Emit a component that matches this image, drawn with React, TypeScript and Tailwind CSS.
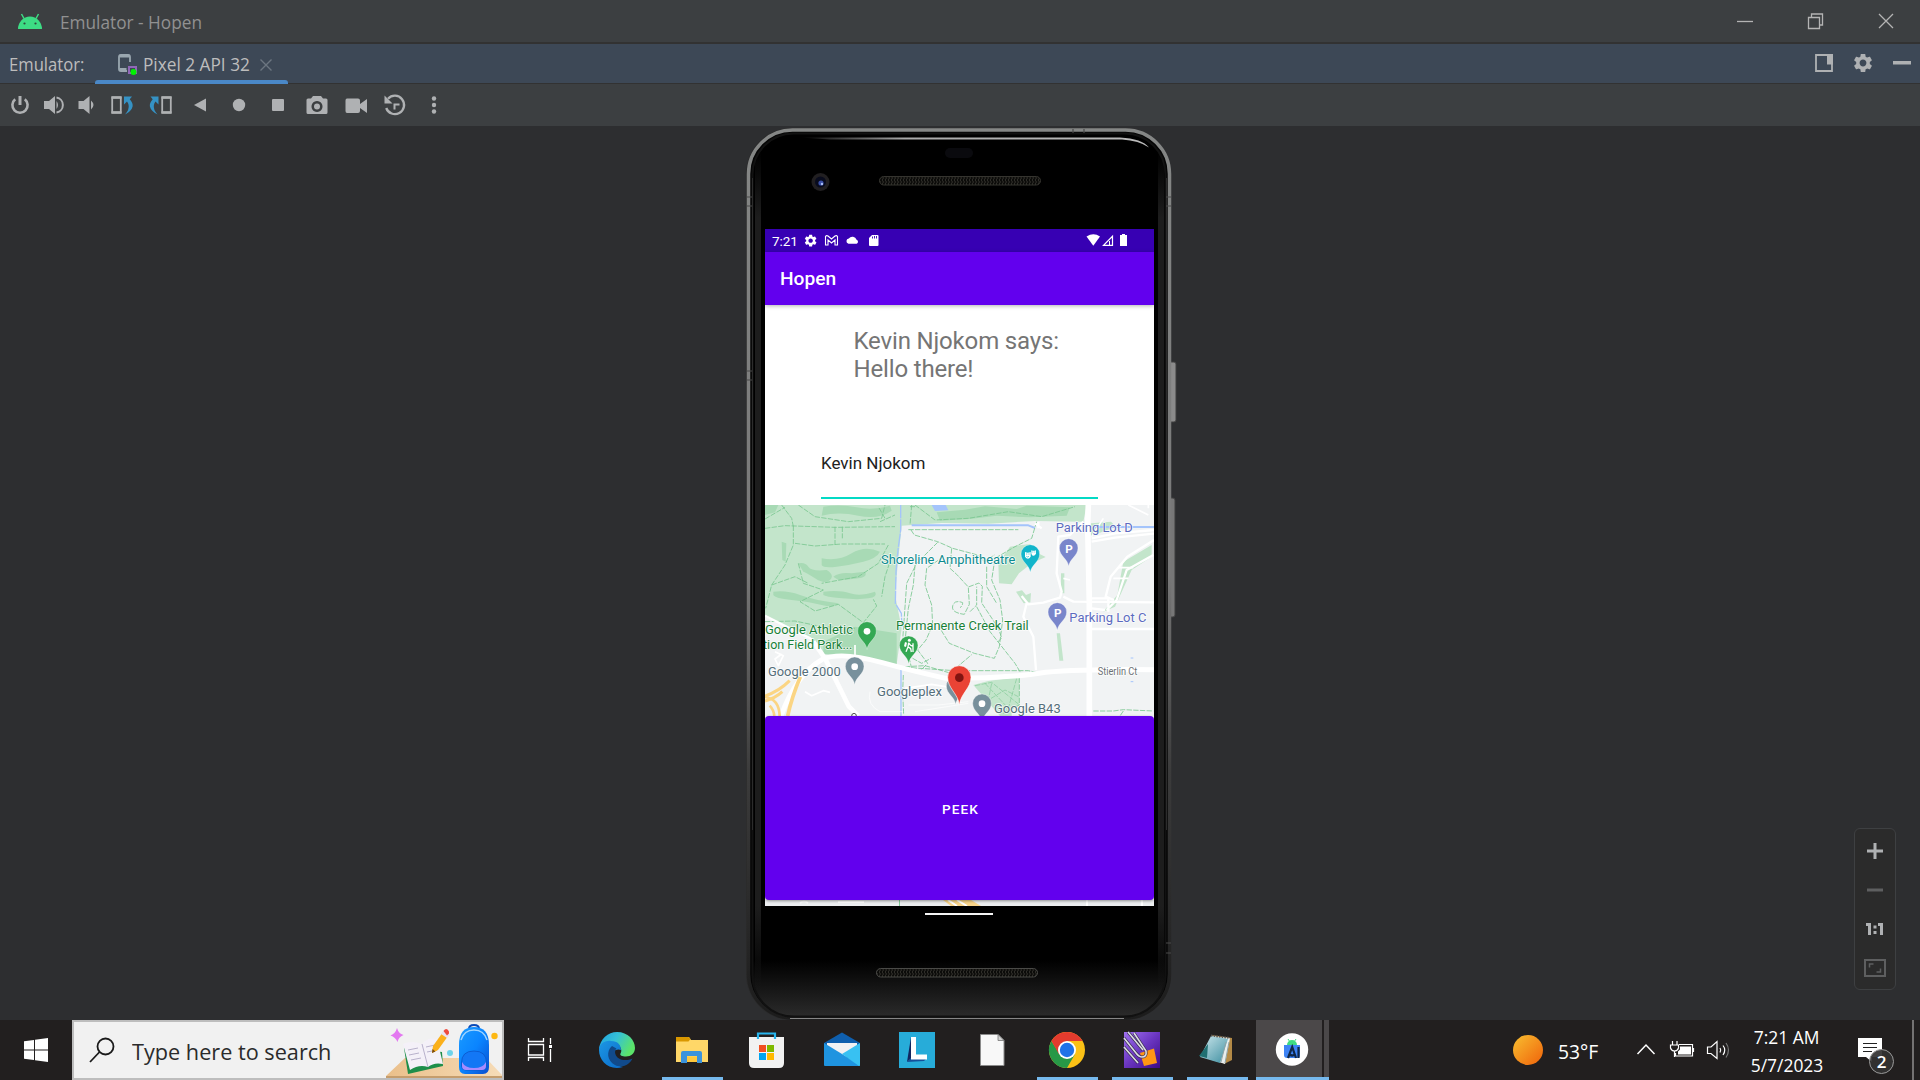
import type { ReactNode } from "react";

type ArtProps = { x: number; y: number; w: number; h: number; children: ReactNode };

/* Inline drawing whose viewBox uses window coordinates. */
function Art({ x, y, w, h, children }: ArtProps) {
  return (
    <svg className="block shrink-0" width={w} height={h} viewBox={`${x} ${y} ${w} ${h}`} fill="none">
      {children}
    </svg>
  );
}

const GEAR =
  "M19.14 12.94c.04-.3.06-.61.06-.94 0-.32-.02-.64-.07-.94l2.03-1.58c.18-.14.23-.41.12-.61l-1.92-3.32c-.12-.22-.37-.29-.59-.22l-2.39.96c-.5-.38-1.03-.7-1.62-.94l-.36-2.54c-.04-.24-.24-.41-.48-.41h-3.84c-.24 0-.43.17-.47.41l-.36 2.54c-.59.24-1.13.57-1.62.94l-2.39-.96c-.22-.08-.47 0-.59.22L2.74 8.87c-.12.21-.08.47.12.61l2.03 1.58c-.05.3-.09.63-.09.94s.02.64.07.94l-2.03 1.58c-.18.14-.23.41-.12.61l1.92 3.32c.12.22.37.29.59.22l2.39-.96c.5.38 1.03.7 1.62.94l.36 2.54c.05.24.24.41.48.41h3.84c.24 0 .44-.17.47-.41l.36-2.54c.59-.24 1.13-.56 1.62-.94l2.39.96c.22.08.47 0 .59-.22l1.92-3.32c.12-.22.07-.47-.12-.61l-2.01-1.58zM12 15.6c-1.98 0-3.6-1.62-3.6-3.6s1.62-3.6 3.6-3.6 3.6 1.62 3.6 3.6-1.62 3.6-3.6 3.6z";

function TitleBar() {
  return (
    <header className="flex h-11 items-center border-b-2 border-[#323232] bg-[#3c3f41]">
      <Art x={0} y={0} w={60} h={42}>
        <path d="M18 29a12 12.500 0 0 1 24 0z" fill="#3ddc84" />
        <path d="M21.500 14l2.500 4.500M38.500 14L36 18.500" stroke="#3ddc84" strokeWidth="1.500" />
        <circle cx="24.500" cy="23.500" r="1.100" fill="#2d4a3a" />
        <circle cx="35.500" cy="23.500" r="1.100" fill="#2d4a3a" />
      </Art>
      <span className="origin-left scale-x-[0.985] pt-0.5 text-[17.500px] whitespace-nowrap text-[#919191]">Emulator - Hopen</span>
      <div className="ml-auto flex">
        <Art x={1710} y={0} w={70} h={42}>
          <path d="M1737 21.500h16" stroke="#b4b4b4" strokeWidth="1.300" />
        </Art>
        <Art x={1780} y={0} w={70} h={42}>
          <path d="M1808.500 17.500h11v11h-11zM1811.500 17v-3h11v11h-3" stroke="#b4b4b4" strokeWidth="1.300" />
        </Art>
        <Art x={1850} y={0} w={70} h={42}>
          <path d="M1879 14l14 14M1893 14l-14 14" stroke="#b4b4b4" strokeWidth="1.300" />
        </Art>
      </div>
    </header>
  );
}

function TabBar() {
  return (
    <div className="flex h-10 items-stretch border-b border-[#323232] bg-[#3d4856]">
      <div className="flex w-[95px] items-center pt-0.5 pl-[9px] text-[17.500px] text-[#bdbdbd]">
        <span className="origin-left scale-x-[0.95]">Emulator:</span>
      </div>
      <div className="relative flex w-[193px] items-center">
        <Art x={95} y={44} w={48} h={39}>
          <path d="M130 62V57q0-2-2-2h-7q-2 0-2 2v12q0 2 2 2h6" stroke="#9aa7b0" strokeWidth="1.800" />
          <path d="M119.500 56h10M119.500 69.500h7" stroke="#9aa7b0" strokeWidth="3" />
          <path d="M129 67h7v6h-7z" stroke="#9068b8" strokeWidth="2" />
          <circle cx="133.500" cy="72" r="3" fill="#00f200" />
        </Art>
        <span className="w-[106px] origin-left scale-x-[0.985] pt-0.5 text-[17.500px] whitespace-nowrap text-[#bdbdbd]">Pixel 2 API 32</span>
        <Art x={249} y={44} w={36} h={39}>
          <path d="M260.500 59.500l11 11M271.500 59.500l-11 11" stroke="#6c7680" strokeWidth="1.400" />
        </Art>
        <div className="absolute inset-x-0 -bottom-px h-1 rounded-t-[3px] bg-[#4a88c7]" />
      </div>
      <div className="ml-auto flex">
        <Art x={1805} y={44} w={38} h={39}>
          <path d="M1816 55h16v16h-16z" stroke="#afb1b3" strokeWidth="1.800" />
          <path d="M1827 54h6v10.500h-6z" fill="#afb1b3" />
        </Art>
        <Art x={1843} y={44} w={39} h={39}>
          <path transform="translate(1851.600 51.600) scale(.95)" d={GEAR} fill="#afb1b3" />
        </Art>
        <Art x={1882} y={44} w={38} h={39}>
          <path d="M1893 61h18v3.500h-18z" fill="#afb1b3" />
        </Art>
      </div>
    </div>
  );
}

function Toolbar() {
  const c = "#afb1b3";
  return (
    <div className="flex h-[42px] bg-[#3c3f41]">
      <Art x={0} y={84} w={37} h={42}>
        <path d="M15.200 99.300a7.600 7.600 0 1 0 9.600 0" stroke={c} strokeWidth="2.600" />
        <path d="M18.500 96h3v9h-3z" fill={c} />
      </Art>
      <Art x={37} y={84} w={31} h={42}>
        <path d="M44 101h5l6-5v18l-6-5h-5zM56.500 101q3 4 0 8z" fill={c} />
        <path d="M56.500 97.500a7.600 7.600 0 0 1 0 15" stroke={c} strokeWidth="2" />
      </Art>
      <Art x={68} y={84} w={35} h={42}>
        <path d="M78.500 101h5l6-5v18l-6-5h-5zM91 100.500q5 4.500 0 9z" fill={c} />
      </Art>
      <Art x={103} y={84} w={39} h={42}>
        <path d="M112.200 97.500h8.600v15h-8.600z" stroke={c} strokeWidth="1.800" />
        <path d="M111.500 97.500h10M111.500 112.500h10" stroke={c} strokeWidth="2.500" />
        <path d="M124 96.500h8l-2.200 2.700q3.400 4 2.800 7.300q-1 4.500-7.600 8q4.500-5 3.600-9.500q-.3-2-1.600-3.600l-3 3z" fill="#3592c4" />
      </Art>
      <Art x={142} y={84} w={39} h={42}>
        <path d="M162.200 97.500h8.600v15h-8.600z" stroke={c} strokeWidth="1.800" />
        <path d="M161.500 97.500h10M161.500 112.500h10" stroke={c} strokeWidth="2.500" />
        <path d="M158.500 96.500h-8l2.200 2.700q-3.400 4-2.800 7.300q1 4.500 7.600 8q-4.500-5-3.600-9.500q.3-2 1.600-3.600l3 3z" fill="#3592c4" />
      </Art>
      <Art x={181} y={84} w={39} h={42}>
        <path d="M206 98.500v13l-12-6.500z" fill={c} />
      </Art>
      <Art x={220} y={84} w={39} h={42}>
        <circle cx="239" cy="105" r="6.200" fill={c} />
      </Art>
      <Art x={259} y={84} w={39} h={42}>
        <rect x="272" y="99" width="12" height="12" rx="1" fill={c} />
      </Art>
      <Art x={298} y={84} w={39} h={42}>
        <path fillRule="evenodd" d="M313 96h8l2 2.500h3q1.500 0 1.500 1.500v12.500q0 1.500-1.500 1.500h-18q-1.500 0-1.500-1.500V100q0-1.500 1.500-1.500h3zM317 101a5.500 5.500 0 1 0 .01 0z" fill={c} />
        <circle cx="317" cy="106.500" r="3" fill={c} />
      </Art>
      <Art x={337} y={84} w={39} h={42}>
        <path d="M347 98.500h11q2 0 2 2v3.500l7-5v14l-7-5v3q0 2-2 2h-11q-1.500 0-1.500-2v-10.500q0-2 1.500-2z" fill={c} />
      </Art>
      <Art x={376} y={84} w={39} h={42}>
        <path d="M388 98.800a9.200 9.200 0 1 1-1.800 9.200" stroke={c} strokeWidth="2.300" />
        <path d="M384.500 95.500v8h8zM393.500 103.500h6v2h-4v4h-2z" fill={c} />
      </Art>
      <Art x={415} y={84} w={39} h={42}>
        <circle cx="434" cy="98.500" r="2.200" fill={c} />
        <circle cx="434" cy="105" r="2.200" fill={c} />
        <circle cx="434" cy="111.500" r="2.200" fill={c} />
      </Art>
    </div>
  );
}

function Pin({ x, y, fill, children }: { x: number; y: number; fill: string; children?: ReactNode }) {
  return (
    <g transform={`translate(${x} ${y})`}>
      <path d="M0 83C-3 60-28 52-28 28a28 28 0 1 1 56 0C28 52 3 60 0 83z" fill={fill} stroke="#fff" strokeOpacity=".55" strokeWidth="2" />
      {children ?? <circle cx="0" cy="29" r="10" fill="#fff" />}
    </g>
  );
}

function Label({ x, y, len, fill, size = 41, children }: { x: number; y: number; len: number; fill: string; size?: number; children: string }) {
  return (
    <text x={x} y={y} textLength={len} lengthAdjust="spacingAndGlyphs" fontSize={size} fill={fill} stroke="#fff" strokeWidth="5" strokeOpacity=".8" paintOrder="stroke" fontWeight="400">
      {children}
    </text>
  );
}

function CampusMap() {
  return (
    <svg className="block h-[211px] w-[389px] font-[Roboto,sans-serif]" viewBox="30 30 1167 633" fill="none" strokeLinejoin="round">
      <rect x="30" y="30" width="1167" height="633" fill="#f1f3f4" />
      {/* parkland */}
      <path d="M30 30H995L985 80 840 78 700 86 560 84 440 92 428 210 420 300 440 400 425 508 300 480 200 475 165 425 30 365z" fill="#c3e5cb" />
      <path d="M205 440L300 395 425 415V508L300 482 205 478z" fill="#a8dab5" />
      <path d="M730 205L765 155 825 147 830 165 872 186 830 205 792 235 770 268 732 265zM783 290l18-4 12 14 15-6-2 28-20 3zM1087 300l18-100 85-50v35l-60 40-50 110-35 15zM918 235h10v60h-10zM905 415h10l10 82h-12z" fill="#c3e5cb" />
      <path d="M655 570L700 558 760 550 793 545V632L770 640 770 663 735 663z" fill="#c3e5cb" />
      <path d="M1008 85l60-5 15 15-75 28z" fill="#c3e5cb" />
      <g fill="#a8dab5">
        <path d="M205 35q50-8 100 2t100-5l5 15q-40 28-100 15t-110 0zM80 140l14 5-2 55-10-5z" />
        <path d="M200 190q50 10 90-15t85-5q-10 20-50 30t-80 15-45-5zM205 290q50-5 80 5t75-5q10 15-20 20t-80 0-55-10zM55 290q40-5 80 10t115 25q-10 15-50 5t-90-15-55-15z" />
        <path d="M130 205q20-5 30 10t55 10q25 15 10 30t-45-5-35-20zM545 52l85-8 60-10 95 8 30-10 130 5-10 25-110 5-100-5-80 10-90 5z" />
        <path d="M30 30l40 0-10 22-30 8zM235 245q20-15 55-10l40-5q10 15-20 20t-60 5z" />
      </g>
      <path d="M530 30h42l8 16-40 2z" fill="#a4c4fb" />
      {/* creeks */}
      <g stroke="#a4c4fb">
        <path d="M437 30V105l-8 60-6 65-2 95 18 30 2 40" strokeWidth="4" strokeDasharray="40 3" />
        <path d="M470 91H820l20 8M1015 96H1197" strokeWidth="6" />
        <path d="M438 520V663" strokeWidth="4" />
        <path d="M1127 489h8M1127 560h8" strokeWidth="3" />
      </g>
      {/* walking trails */}
      <g stroke="#7cc792" strokeWidth="2.600" strokeDasharray="16 4">
        <path d="M30 100L90 92 240 97 420 95M115 92V150l-25 60-40 60-18 70M30 72l60-35M80 30l30 40 5 25M130 30l50 35 100 15 100-10 10-40M390 70l-20-35M120 145l60 8 80-6 130 0M130 205l15 60 60 20-70 35 45 28 70-20 75 55 40-50-10-20M50 270l70-25 40 20M240 95V150M262 95v35M375 80l45-20M400 150l-30 55-60 40-110 20M410 185l-20 60-10 60M30 380L120 378 200 395 300 400" />
        <path d="M460 104H790M470 30l-5 60M465 35h15M480 30l60 45 100-5 120-20 100 15 100-30M845 80l-15 50-50 25-60 35-10 65 25 60 8 60-10 80-15 35-60-15-75-30-25-40V380" />
        <path d="M468 105l10 15 70 20 45 20 75 20 20 20 30-20M548 142L485 205 455 265 442 450M565 185l-50 35-5 50 20 60 3 60-20 45-25 30 30 40-25 25-50-10M480 210l-5 60-15 70-10 100 20 80" />
        <path d="M590 160l-5 60 20 18 35 38 32-12 10 10-2 50 50 75 10 30-12 12M640 278l3 50-15 30q-40-5-35-25t30-10q0 10-8 15M645 350l20-20V275M665 335l40 75 75 95 15 25M695 215v60l30 50M450 515l60-3 75 22 65-55M450 517l150 10 220 0 25 5M455 480l45 25 28-15M1015 648h60l30-4 90 4M1105 648l-10 15M445 540l-2 50 3 70M793 548V630l-50 25" />
        <path d="M660 572l50-10 80 65M690 565l70 75 25-90M710 565l-10 50 50-30 40 20" strokeWidth="1.800" />
      </g>
      {/* streets */}
      <g stroke="#fff">
        <path d="M1000 30l-2 60 5 230v343" strokeWidth="17" />
        <path d="M78 663q45-125 124-170 55-25 180 10 90 25 190 47 200 0 300-18 110-10 325-8" strokeWidth="15" />
        <path d="M175 440l35 50 30 60 42 85 28 28" strokeWidth="14" />
        <path d="M30 362l55 28 90 45" strokeWidth="7" />
        <path d="M985 80l-40 40-35 5-5 110 15 55-5 18-50 15-45 5-20-25M815 325l-10 40 30 60 8 100M925 305l30 15 245 2M1010 130l70-15 117-10M1010 140l70-12 117-12M1197 135l-80 50-50 60-15 60 25 10M1055 345l30-30 30-90 80-45M1010 310h50v40M1010 402H1197M1010 340l40 5M840 85l20 15M850 100v-20" strokeWidth="7" />
        <path d="M1010 125l35-55M1090 218h45M1075 250h45M1120 30l60 30M1180 30v10M60 470l25 12-15 30-10-20 20-15M300 480v-30M150 590l20 12 35-15 20 5M450 580l80-12 60 10M925 250l20 5" strokeWidth="5" />
        <path d="M345 590q-10 40 30 60h70M460 630h90l90-10M480 650l160-25" strokeWidth="2" />
      </g>
      {/* highway ramps */}
      <g stroke="#fbd583">
        <path d="M30 603q42-14 74-46M30 618q30-8 52-28" strokeWidth="9" />
        <path d="M30 606q42 5 44 57M44 632q12 12 14 31" strokeWidth="8" />
        <path d="M98 663q12-56 38-118" strokeWidth="11" />
      </g>
      <path d="M290 663q0-8 7-8t7 8" stroke="#555" strokeWidth="3" />
      {/* place labels and markers */}
      <Label x={378} y={207} len={403} fill="#0b8a8f">Shoreline Amphitheatre</Label>
      <Label x={902} y={112} len={231} fill="#5c6bc0">Parking Lot D</Label>
      <Label x={943} y={381} len={231} fill="#5c6bc0">Parking Lot C</Label>
      <Label x={423} y={404} len={398} fill="#188038">Permanente Creek Trail</Label>
      <Label x={30} y={416} len={264} fill="#188038">Google Athletic</Label>
      <Label x={24} y={462} len={268} fill="#188038">tion Field Park...</Label>
      <Label x={39} y={544} len={218} fill="#546e7a">Google 2000</Label>
      <Label x={366} y={604} len={195} fill="#546e7a">Googleplex</Label>
      <Label x={717} y={654} len={200} fill="#546e7a">Google B43</Label>
      <Label x={1028} y={540} len={119} size={30} fill="#6b7074">Stierlin Ct</Label>
      <Pin x={826} y={149} fill="#12b5cb">
        <path d="M-16 22q8 4 17 0v14q-8 12-17 0zM3 17q7 3 14 0v10q-4 8-10 6l-4-5z" fill="#fff" />
        <path d="M-13 28h4M-6 28h4M-12 35q4 4 8 0M6 22h3M12 22h3" stroke="#12b5cb" strokeWidth="2" />
      </Pin>
      {[[941, 131], [907, 323]].map(([x, y]) => (
        <Pin key={x} x={x} y={y} fill="#7986cb">
          <text x="1" y="42" textAnchor="middle" fontSize="35" fontWeight="700" fill="#fff">P</text>
        </Pin>
      ))}
      <Pin x={336} y={380} fill="#34a853" />
      <Pin x={461} y={423} fill="#34a853">
        <circle cx="2" cy="13" r="4.500" fill="#fff" />
        <path d="M0 20l-2 13-6 14M-1 33l7 5 2 10M0 21l6 7 6 2M13 22v26" stroke="#fff" strokeWidth="4" />
        <path d="M-11 18l6 2-3 13-6-2z" fill="#fff" />
      </Pin>
      <Pin x={299} y={486} fill="#78909c" />
      <Pin x={602} y={545} fill="#78909c" />
      <Pin x={681} y={597} fill="#78909c" />
      <path d="M613 630C609 595 578 580 578 547a35 35 0 1 1 70 0C648 580 617 595 613 630z" fill="#ea4335" stroke="#fff" strokeOpacity=".6" strokeWidth="3" />
      <circle cx="613" cy="548" r="13" fill="#811411" />
    </svg>
  );
}

function PhoneShell() {
  return (
    <svg className="absolute top-0 left-0" width="440" height="894" viewBox="740 126 440 894" fill="none">
      <defs>
        <linearGradient id="rim" x1="0" y1="128" x2="0" y2="1020" gradientUnits="userSpaceOnUse">
          <stop offset="0" stopColor="#858786" />
          <stop offset=".5" stopColor="#787878" />
          <stop offset=".72" stopColor="#3c3c3c" />
          <stop offset="1" stopColor="#1c1c1c" />
        </linearGradient>
        <linearGradient id="glass" x1="0" y1="960" x2="0" y2="1018" gradientUnits="userSpaceOnUse">
          <stop offset="0" stopColor="#000" />
          <stop offset="1" stopColor="#2c2c2c" />
        </linearGradient>
        <linearGradient id="side" x1="0" y1="150" x2="0" y2="990" gradientUnits="userSpaceOnUse">
          <stop offset="0" stopColor="#1d1d1d" stopOpacity="0" />
          <stop offset=".08" stopColor="#1d1d1d" />
          <stop offset=".9" stopColor="#1d1d1d" />
          <stop offset="1" stopColor="#1d1d1d" stopOpacity="0" />
        </linearGradient>
        <linearGradient id="shine" x1="800" y1="0" x2="1150" y2="0" gradientUnits="userSpaceOnUse">
          <stop offset="0" stopColor="#aaa" stopOpacity="0" />
          <stop offset=".3" stopColor="#aaa" />
          <stop offset="1" stopColor="#bbb" />
        </linearGradient>
        <pattern id="mesh" width="3" height="4" patternUnits="userSpaceOnUse">
          <rect width="3" height="4" fill="#0c0c0a" />
          <path d="M0 0l1.500 2L0 4" stroke="#3d3c36" strokeWidth=".8" />
        </pattern>
      </defs>
      <rect x="1169" y="362" width="7" height="60" rx="2" fill="#8b8b8b" stroke="#3f3f3f" />
      <rect x="1169" y="498" width="6" height="119" rx="2" fill="#777" stroke="#3f3f3f" />
      <rect x="746" y="128" width="425" height="892" rx="46" fill="#2a2a2a" />
      <rect x="748.500" y="130" width="421" height="888" rx="44" fill="#050505" stroke="url(#rim)" strokeWidth="3.500" />
      <rect x="752.500" y="133.500" width="413" height="883" rx="41" stroke="#111" strokeWidth="2" fill="url(#glass)" />
      <path d="M755 150h6v840h-6zM1158 150h6v840h-6z" fill="url(#side)" />
      <path d="M752.500 178V830M1166.500 178V830" stroke="#2c2c2c" strokeWidth="1" />
      <path d="M747 197h5M747 206h5M1166 197h5M1166 206h5M747 371h5M747 380h5M1166 943h5M1166 953h5M1073 129v4M1084 129v4" stroke="#4a4a4a" strokeWidth="1.200" />
      <path d="M800 137.500H1120q22 1 29 10q-10-7-27-8H830z" fill="url(#shine)" />
      <path d="M790 1018.500H1124" stroke="#868686" strokeWidth="1.200" />
      <rect x="945" y="148" width="28" height="10" rx="5" fill="#0a0a0e" />
      <circle cx="820.500" cy="182" r="9" fill="#211f21" />
      <circle cx="820.500" cy="182" r="5.500" fill="#080b1d" />
      <circle cx="821" cy="183" r="2.600" fill="#3a4fa8" />
      <circle cx="822" cy="184" r="1.200" fill="#a9bdf5" />
      <rect x="879.500" y="176.500" width="161" height="8.500" rx="4.200" fill="url(#mesh)" stroke="#35342f" />
      <rect x="876.500" y="968.500" width="161" height="8.500" rx="4.200" fill="url(#mesh)" stroke="#4a4a47" />
    </svg>
  );
}

function StatusBar() {
  return (
    <div className="flex h-[23px] items-center bg-[#3700b3] pl-[7px] text-[13.500px] text-white">
      <span className="w-[29px] pt-px tracking-[-0.1px]">7:21</span>
      <Art x={801} y={229} w={82} h={23}>
        <path transform="translate(803.200 233.200) scale(.62)" d={GEAR} fill="#fff" />
        <path d="M825.500 245v-8.500q1-1.500 2.500-.5l3.500 3 3.500-3q1.500-1 2.500.5v8.500h-2.500v-5l-3.500 3-3.500-3v5z" stroke="#fff" strokeWidth="1.100" />
        <path d="M848.500 243.800a2.700 2.700 0 0 1 .3-5.300a4.500 4.500 0 0 1 7.800 1.200a2.200 2.200 0 0 1 0 4.100z" fill="#fff" />
        <path d="M872 235h5.500q1 0 1 1v9q0 1-1 1h-7.500q-1 0-1-1v-7z" fill="#fff" />
        <path d="M872.500 236.500v2M874.500 236v2.500M876.500 236v2.500" stroke="#3700b3" strokeWidth=".9" />
      </Art>
      <div className="ml-auto pr-[20px]">
        <Art x={1080} y={229} w={54} h={23}>
          <path d="M1086.500 236.500q7-4.500 13.500 0l-6.700 9.200z" fill="#fff" />
          <path d="M1103.500 245.300h9v-9z" stroke="#fff" strokeWidth="1.200" />
          <path d="M1109.500 241v4" stroke="#fff" />
          <path d="M1122 234h3v1h2v11h-7v-11h2z" fill="#fff" />
        </Art>
      </div>
    </div>
  );
}

function Phone() {
  return (
    <div className="relative ml-[740px] h-[894px] w-[440px]">
      <PhoneShell />
      <div className="relative mt-[103px] ml-[25px] flex h-[677px] w-[389px] flex-col bg-white font-[Roboto,sans-serif]">
        <StatusBar />
        <div className="relative z-10 flex h-[53px] items-center bg-[#6200ee] pt-0.5 pl-[15px] text-[19.200px] font-medium text-white shadow-[0_1px_4px_rgba(0,0,0,0.3)]">
          Hopen
        </div>
        <div className="h-[200px] bg-white">
          <p className="pt-[23px] pl-[88.500px] text-[24px] leading-[27.500px] tracking-[-0.160px] whitespace-nowrap text-[#757575]">
            Kevin Njokom says:
            <br />
            Hello there!
          </p>
          <div className="mt-[67px] ml-14 h-[49px] w-[277px] border-b-2 border-[#03dac5] text-[17px] leading-[26px] text-[#212121]">Kevin Njokom</div>
        </div>
        <CampusMap />
        <div className="relative z-10 flex h-[184px] items-center justify-center rounded-[4px] bg-[#6200ee] pt-[3px] pl-[2px] text-[13.600px] font-medium tracking-[1.050px] text-white shadow-[0_1px_3px_rgba(0,0,0,0.4)]">
          PEEK
        </div>
        <Art x={765} y={900} w={389} h={6}>
          <rect x="765" y="896" width="389" height="10" fill="#eceef0" />
          <path d="M943 900h28l10 6h-30z" fill="#f9d58a" />
          <path d="M948 900l9 6M957 900l10 6M1087 900v6M1142 900v6M838 902h26M800 903q4-3 8 0" stroke="#fff" strokeWidth="2" />
          <path d="M899.500 900v6" stroke="#83ca98" />
        </Art>
      </div>
      <div className="relative mt-[7px] ml-[185px] h-0.5 w-[68px] bg-[#f4f4f4]" />
    </div>
  );
}

function ZoomPanel() {
  return (
    <div className="mr-6 mb-[30px] ml-auto flex w-[42px] flex-col items-center self-end rounded-[6px] border border-[#3e4042] bg-[#2b2b2b]">
      <Art x={1855} y={829} w={40} h={42}>
        <path d="M1867 849.500h16v3h-16zM1873.500 843h3v16h-3z" fill="#afb1b3" />
      </Art>
      <Art x={1855} y={871} w={40} h={38}>
        <path d="M1867 888.500h16v3h-16z" fill="#5e5f60" />
      </Art>
      <Art x={1855} y={909} w={40} h={38}>
        <path d="M1866 923h5v12h-3v-9h-2zM1878 923h5v12h-3v-9h-2zM1873.500 925.500h3v3h-3zM1873.500 931h3v3h-3z" fill="#afb1b3" />
      </Art>
      <Art x={1855} y={947} w={40} h={42}>
        <path d="M1865 960h20v16h-20z" stroke="#5e5f60" strokeWidth="2" />
        <path d="M1869.500 967.500v-3.500h4M1880.500 968.500v3.500h-4" stroke="#5e5f60" strokeWidth="1.500" />
      </Art>
    </div>
  );
}

function SearchBox() {
  return (
    <div className="flex h-[60px] w-[432px] items-center border-2 border-[#bdbdbd] bg-[#f1f1f1]">
      <Art x={74} y={1022} w={58} h={56}>
        <circle cx="105.500" cy="1046.500" r="8" stroke="#1a1a1a" strokeWidth="1.800" />
        <path d="M99.500 1052l-9.500 10" stroke="#1a1a1a" strokeWidth="1.800" />
      </Art>
      <span className="w-[252px] origin-left scale-x-[0.985] pt-0.5 text-[22px] whitespace-nowrap text-[#2b2b2b]">Type here to search</span>
      <Art x={384} y={1022} w={118} h={56}>
        <defs>
          <linearGradient id="desk" x1="0" x2="1">
            <stop stopColor="#eabf8a" />
            <stop offset="1" stopColor="#f6dcb8" />
          </linearGradient>
          <linearGradient id="bag" x1="0" y1="0" x2="1" y2="1">
            <stop stopColor="#1a9bff" />
            <stop offset=".5" stopColor="#0a84ff" />
            <stop offset="1" stopColor="#0a4fd0" />
          </linearGradient>
        </defs>
        <path d="M386 1076l19-18h81l17 18z" fill="url(#desk)" />
        <path d="M386 1076h117v3H386z" fill="#c59d6d" />
        <path d="M397 1028q1.500 5.500 6.500 7-5 2-6 7-2-5-7-6.500 5-2 6.500-7.500z" fill="#e378f0" />
        <path d="M404 1048l4 26 35-8-1-14z" fill="#1e8e4a" />
        <path d="M403 1044q9-4 19 0 6-7 15-5l6 25q-9-2-15 3-9-3-18 3z" fill="#f4f0f8" />
        <path d="M422 1044l6 23M408 1050l10-2M409 1055l10-2M411 1060l10-2M426 1047l9-2M427 1052l10-2" stroke="#b9b2cc" strokeWidth="1" />
        <path d="M432 1053l1-7 10-14 5 4-10 14z" fill="#fbb01b" />
        <path d="M441 1034l3-4 6 5-3 3z" fill="#e9e3f2" />
        <path d="M443.500 1031q2-3 4-1.500t1.500 4l-2 2z" fill="#ee4b3e" />
        <path d="M432 1053l.5-4 3 2.500z" fill="#7a4a12" />
        <circle cx="450" cy="1053" r="3" fill="#6ed3ea" />
        <circle cx="494.500" cy="1036" r="3.200" fill="#fdb813" />
        <path d="M469 1029q0-4 5-4t5 4" stroke="#0a4ab8" strokeWidth="2" />
        <path d="M459 1045q0-18 15-18t15 18v22q0 7-6 7h-18q-6 0-6-7z" fill="url(#bag)" />
        <path d="M461 1040q3-10 13-10t13 10" stroke="#9fd4ff" strokeWidth="1.500" />
        <path d="M461.500 1063q0-12 12.500-12t12.500 12v3q0 4-4 4h-17q-4 0-4-4z" fill="#1377f5" stroke="#0a55c8" strokeWidth=".8" />
        <path d="M462 1062q3 6 12 6t12-6v4q0 4-4 4h-16q-4 0-4-4z" fill="#a88bff" />
      </Art>
    </div>
  );
}

function TaskItem({ x, running, active, children }: { x: number; running?: boolean; active?: boolean; children: ReactNode }) {
  return (
    <Art x={x} y={1020} w={75} h={60}>
      {active && <path d={`M${x + 1} 1020h66v60h-66z`} fill="#4b4849" />}
      {active && <path d={`M${x + 69} 1020h5v60h-5z`} fill="#4b4849" />}
      {children}
      {running && <path d={active ? `M${x + 1} 1077h73v3h-73z` : `M${x + 7} 1077h61v3h-61z`} fill="#76b9ed" />}
    </Art>
  );
}

function Taskbar() {
  return (
    <footer className="flex h-[60px] bg-[#221f1f]">
      <Art x={0} y={1020} w={72} h={60}>
        <path d="M24 1041.200l10-1.300v9.600H24zM35 1039.700l13-1.700v11.500H35zM24 1050.500h10v9.600l-10-1.300zM35 1050.500h13v11.500l-13-1.700z" fill="#fff" />
      </Art>
      <SearchBox />
      <Art x={504} y={1020} w={76} h={60}>
        <path d="M528.500 1038v3.500h15v-3.500M528.500 1061v-3.500h15v3.500M528.500 1044.500h15v10.500h-15zM550.500 1038v6M550.500 1049v13" stroke="#fff" strokeWidth="1.300" />
        <path d="M549 1045h3v3h-3z" fill="#fff" />
      </Art>

      <TaskItem x={580}>
        <defs>
          <linearGradient id="edgeTop" x1="0" x2="1" y1="0" y2=".4">
            <stop stopColor="#1ea0e0" />
            <stop offset=".5" stopColor="#35c1d8" />
            <stop offset="1" stopColor="#5be36a" />
          </linearGradient>
          <linearGradient id="edgeLeft" x1="0" x2="1" y1="0" y2="1">
            <stop stopColor="#1c97e4" />
            <stop offset="1" stopColor="#0b6ac9" />
          </linearGradient>
        </defs>
        <path d="M599 1049c1-10 9-17 18-17 11 0 18 8 18 16 0 5-4 8.500-9 8.500-4 0-6.500-1-5.500-3 2-3 .5-10-8.500-10-5 0-10 2-13 5.500z" fill="url(#edgeTop)" />
        <path d="M599 1050c0-6 6-10 12-9 7 0 10 4 10 9-4-2-10 1-9 7 1 5 6 9 11 10-14 4-24-6-24-17z" fill="url(#edgeLeft)" />
        <path d="M612 1046c-6 5-5 15 3 19 8 4 15-1 17.500-6.500-5 2.500-12 2-15-1-3-3-3-7-1-9z" fill="#114a8b" />
      </TaskItem>
      <TaskItem x={655} running>
        <path d="M676 1037h13l2 3h17v22h-32z" fill="#ffd768" />
        <path d="M676 1037h12.500l2 2-2 2.500H676z" fill="#d99700" />
        <path d="M681 1063v-10q0-2 2-2h17q2 0 2 2v10h-5v-7h-10v7z" fill="#3b93dc" />
        <path d="M687 1056.500h10v5.500h-10z" fill="#ffc83d" />
      </TaskItem>
      <TaskItem x={730}>
        <path d="M749 1037h35v26q0 5-5 5h-25q-5 0-5-5z" fill="#f2f2f2" />
        <path d="M758 1039v-5.500h17v5.500" stroke="#28b5ee" strokeWidth="2.200" />
        <path d="M759 1045h7v7h-7z" fill="#f25022" />
        <path d="M767 1045h7v7h-7z" fill="#7fba00" />
        <path d="M759 1053h7v7h-7z" fill="#00a4ef" />
        <path d="M767 1053h7v7h-7z" fill="#ffb900" />
      </TaskItem>
      <TaskItem x={805}>
        <path d="M824 1043l18-10.500 18 10.500v6h-36z" fill="#0f5fae" />
        <path d="M827 1043h30v10l-15 5-15-5z" fill="#f1f1f3" />
        <path d="M824 1043l36 22q0 1-1 1h-34q-1 0-1-1z" fill="#1f94e0" />
        <path d="M860 1043v22q0 1-1 1l-17-12z" fill="#38c1f2" />
      </TaskItem>
      <TaskItem x={880}>
        <path d="M899 1032h36v36h-36z" fill="#27acd9" />
        <path d="M911 1037l-4 25 4-3.500z" fill="#12265f" />
        <path d="M907 1062l4-4 16 0-3 3z" fill="#14509a" />
        <path d="M911 1037h5v17.500h11v5h-16z" fill="#fff" />
      </TaskItem>
      <TaskItem x={955}>
        <path d="M980.500 1034.500H998l6 6v25h-23.500z" fill="#f8f8f8" stroke="#8b8b8b" />
        <path d="M998 1034.500v6h6z" fill="#d2d2d2" stroke="#777" strokeWidth=".8" />
      </TaskItem>
      <TaskItem x={1030} running>
        <circle cx="1067" cy="1050" r="18" fill="#fbc116" />
        <path d="M1051.400 1041a18 18 0 0 0 15.600 27l7.800-13.500h-14.800z" fill="#279847" />
        <path d="M1051.400 1041a18 18 0 0 1 31.200 0H1067l-7.800 13.500z" fill="#e33b2e" />
        <circle cx="1067" cy="1050" r="9" fill="#fff" />
        <circle cx="1067" cy="1050" r="7.200" fill="#1f72e8" />
      </TaskItem>
      <TaskItem x={1105} running>
        <defs>
          <linearGradient id="clip" x1="0" y1="0" x2="1" y2="1">
            <stop stopColor="#a070ee" />
            <stop offset=".5" stopColor="#6a35c0" />
            <stop offset="1" stopColor="#3a0a86" />
          </linearGradient>
        </defs>
        <path d="M1124 1032h36v36h-36z" fill="url(#clip)" />
        <path d="M1140 1053l14-4.500 3 14.500-13 3z" fill="#ff9614" />
        <path d="M1128 1032l15 18M1134 1033l12 18q1 6-4 6-3 0-6-4l-12-15M1124 1047l14 16" stroke="#3a3050" strokeWidth="3" />
        <path d="M1128 1032l15 18M1134 1033l12 18q1 6-4 6-3 0-6-4l-12-15M1124 1047l14 16" stroke="#dcdce4" strokeWidth="1.600" />
      </TaskItem>
      <TaskItem x={1180} running>
        <defs>
          <linearGradient id="pad" x1="0" y1="0" x2="1" y2="1">
            <stop stopColor="#cfe9ee" />
            <stop offset="1" stopColor="#3d8ea0" />
          </linearGradient>
        </defs>
        <path d="M1212 1035l20 3v22l-8 4z" fill="#b48a46" />
        <path d="M1212 1036l18 2-5 26-16-5z" fill="#e9eeee" />
        <path d="M1211 1036l17 3-8 24-20-6z" fill="url(#pad)" />
        <path d="M1208 1044l-9 12 8 2z" fill="#1f6f72" />
        <path d="M1226 1042l-5 20M1229 1042l-4 21" stroke="#8fa3a6" />
        <path d="M1211 1035.500l19 2.500" stroke="#555" strokeWidth="2" strokeDasharray="1.500 1.200" />
      </TaskItem>
      <TaskItem x={1255} running active>
        <circle cx="1292" cy="1049.500" r="16.200" fill="#fff" />
        <path d="M1284 1045h16v10q0 3-3 3h-10q-3 0-3-3z" fill="#3e84f5" />
        <path d="M1287 1045a5 5 0 0 1 10 0z" fill="#3ddc84" />
        <path d="M1288 1039l2 3M1296 1039l-2 3" stroke="#3ddc84" />
        <path d="M1288 1058l4.200-11 3.800 11M1289.500 1054.500q3 2 5 0M1298.500 1047v11" stroke="#0f2748" strokeWidth="2.200" />
      </TaskItem>

      <div className="ml-auto flex text-white">
        <Art x={1500} y={1020} w={59} h={60}>
          <defs>
            <linearGradient id="sun" x1="0" y1="0" x2="1" y2="1">
              <stop stopColor="#f8bf30" />
              <stop offset="1" stopColor="#f0620a" />
            </linearGradient>
          </defs>
          <circle cx="1528" cy="1050" r="15" fill="url(#sun)" />
        </Art>
        <div className="flex w-[66px] items-center pt-[3px] text-[20.500px]">
          <span className="-ml-px origin-left scale-x-[0.94]">53°F</span>
        </div>
        <Art x={1625} y={1020} w={36} h={60}>
          <path d="M1637.500 1054l8.500-9 8.500 9" stroke="#fff" strokeWidth="1.500" />
        </Art>
        <Art x={1661} y={1020} w={39} h={60}>
          <path d="M1679 1044.500h13.500v11.500h-17v-3M1693.500 1048v4M1672.500 1041v4M1677 1041v4M1670.500 1045h8v3q-1 3-4 3t-4-3zM1674.500 1051v6" stroke="#fff" strokeWidth="1.200" />
          <path d="M1680 1046.500h11v8h-13v-3l2-2z" fill="#fff" />
        </Art>
        <Art x={1700} y={1020} w={36} h={60}>
          <path d="M1707.500 1047v6.500h3.500l6 5v-17l-6 5.500z" stroke="#fff" strokeWidth="1.200" />
          <path d="M1720 1048q1.500 2 0 4.500M1723 1045.500q3.500 4.500 0 9.500" stroke="#fff" strokeWidth="1.200" />
          <path d="M1726 1043q5 7 0 14.500" stroke="#777" strokeWidth="1.200" />
        </Art>
        <div className="flex w-[102px] flex-col items-center justify-center pt-px text-[17.800px] leading-[28px]">
          <span className="scale-x-[0.98] whitespace-nowrap">7:21 AM</span>
          <span className="scale-x-[0.98] whitespace-nowrap">5/7/2023</span>
        </div>
        <Art x={1838} y={1020} w={74} h={60}>
          <path d="M1858 1038h24v19h-10v5l-6-5h-8z" fill="#fff" />
          <path d="M1863 1043.500h14M1863 1047.500h14M1863 1051.500h9" stroke="#222" strokeWidth="1.200" />
          <circle cx="1881.500" cy="1061.500" r="12" fill="#333132" fillOpacity=".93" stroke="#9a9a9a" />
          <text x="1881.500" y="1067.500" textAnchor="middle" fontSize="17" fontWeight="600" fill="#fff">2</text>
        </Art>
        <div className="w-2 border-l-2 border-[#747272]" />
      </div>
    </footer>
  );
}

export default function App() {
  return (
    <div className="flex h-[1080px] w-[1920px] flex-col overflow-hidden bg-[#2d2e30] font-['Open_Sans','Noto_Sans',sans-serif]">
      <TitleBar />
      <TabBar />
      <Toolbar />
      <main className="flex h-[894px] bg-[#2d2e30]">
        <Phone />
        <ZoomPanel />
      </main>
      <Taskbar />
    </div>
  );
}
